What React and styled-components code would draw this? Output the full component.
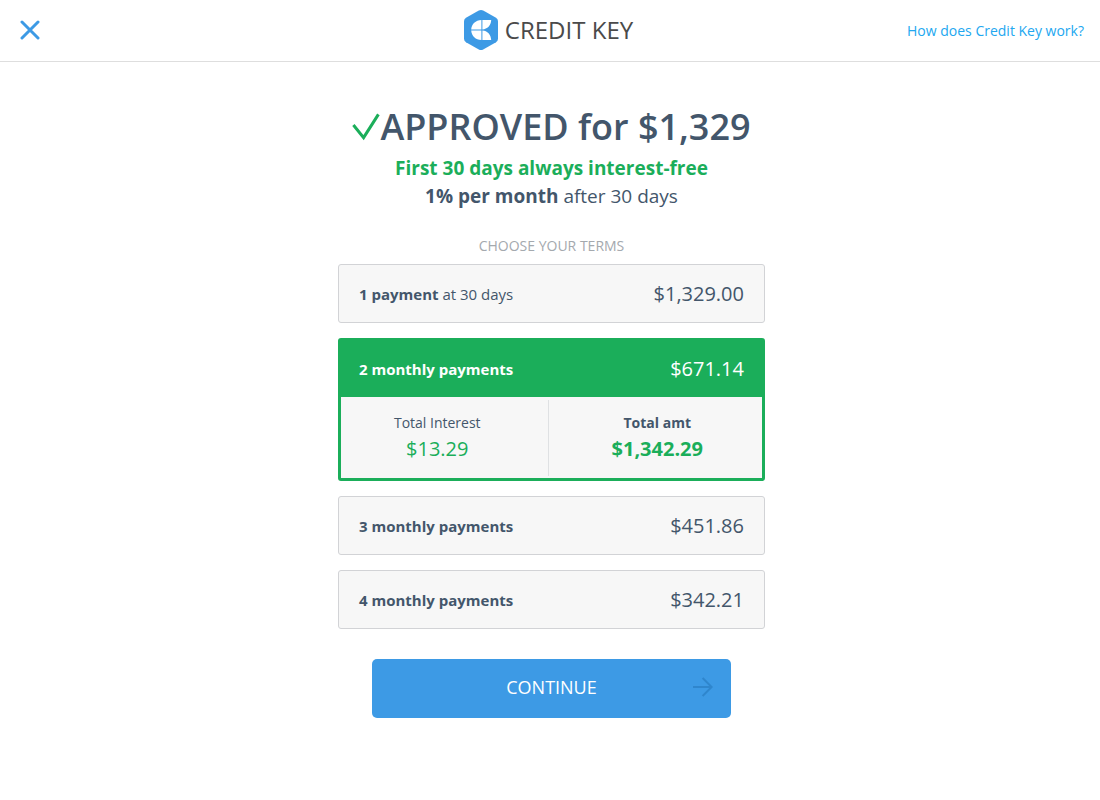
import React, { useState } from 'react'
import styled, { createGlobalStyle } from 'styled-components'

const plans = [
    { id: 1, name: '1 payment', note: ' at 30 days', amount: '$1,329.00', interest: '$0.00', total: '$1,329.00' },
    { id: 2, name: '2 monthly payments', amount: '$671.14', interest: '$13.29', total: '$1,342.29' },
    { id: 3, name: '3 monthly payments', amount: '$451.86', interest: '$26.58', total: '$1,355.58' },
    { id: 4, name: '4 monthly payments', amount: '$342.21', interest: '$39.84', total: '$1,368.84' },
]

function Plan({ plan, checked, onSelect }) {
    return (
        <PlanBox $open={checked}>
            <PlanRow $open={checked}>
                <Radio type='radio' name='terms' value={plan.id} checked={checked} onChange={() => onSelect(plan.id)} />
                <PlanName><b>{plan.name}</b>{plan.note}</PlanName>
                <Amount>{plan.amount}</Amount>
            </PlanRow>
            {checked && (
                <Details>
                    <Interest>
                        <dt>Total Interest</dt>
                        <dd>{plan.interest}</dd>
                    </Interest>
                    <Total>
                        <dt>Total amt</dt>
                        <dd>{plan.total}</dd>
                    </Total>
                </Details>
            )}
        </PlanBox>
    )
}

function App() {
    const [selected, setSelected] = useState(2)

    return (
        <>
            <GlobalStyle />
            <Header>
                <CloseButton type='button' aria-label='Close'>
                    <svg width='20' height='20' viewBox='0 0 20 20' fill='none' stroke='#3d9ae5' strokeWidth='3' strokeLinecap='round'>
                        <path d='M2 2L18 18M18 2L2 18' />
                    </svg>
                </CloseButton>
                <Logo>
                    <svg width='34' height='40' viewBox='0 0 34 40'>
                        <path d='M14.8 .6Q17 -.6 19.2 .6L32 7.8Q34 9 34 11.2V28.8Q34 31 32 32.2L19.2 39.4Q17 40.6 14.8 39.4L2 32.2Q0 31 0 28.8V11.2Q0 9 2 7.8Z' fill='#3d9ae5' />
                        <path d='M17.4 10V19.4H7.2C7.6 14 11.6 10.2 17.4 10ZM7.2 20.4H17.4V30C11.6 29.8 7.6 26 7.2 20.4ZM18.4 10H27.2C27 15.4 23.4 19.2 18.4 19.4ZM18.4 20.4C23.4 20.6 27 24.6 27.2 30H18.4Z' fill='#fff' />
                    </svg>
                    <span>CREDIT KEY</span>
                </Logo>
                <HelpLink href='#how'>How does Credit Key work?</HelpLink>
            </Header>

            <Main>
                <Title>
                    <svg width='28' height='28' viewBox='0 0 28 28' fill='none' stroke='#1bae5a' strokeWidth='3'>
                        <path d='M1.4 12L11.6 24.6L26.4 1.4' />
                    </svg>
                    APPROVED for $1,329
                </Title>
                <Perk>First 30 days always interest-free</Perk>
                <Rate><b>1% per month</b> after 30 days</Rate>

                <Terms>
                    <legend>CHOOSE YOUR TERMS</legend>
                    {plans.map((plan) => (
                        <Plan key={plan.id} plan={plan} checked={plan.id === selected} onSelect={setSelected} />
                    ))}
                </Terms>

                <Continue type='button'>
                    <span>CONTINUE</span>
                    <svg width='20' height='20' viewBox='0 0 20 20' fill='none' stroke='#2f86cd' strokeWidth='2'>
                        <path d='M0 10H18.6M9.6 1L18.6 10L9.6 19' />
                    </svg>
                </Continue>
            </Main>
        </>
    )
}

export default App

const GlobalStyle = createGlobalStyle`
* {
    box-sizing: border-box;
}
body {
    margin: 0;
    background-color: #fff;
    color: #43566b;
    font-family: "Open Sans", "Noto Sans", sans-serif;
}
button {
    font-family: inherit;
    cursor: pointer;
}
`

const Header = styled.header`
    display: grid;
    grid-template-columns: 1fr auto 1fr;
    align-items: center;
    padding: 10px 16px 11px 13px;
    border-bottom: 1px solid #dedede;
`

const CloseButton = styled.button`
    display: flex;
    justify-self: start;
    padding: 7px;
    border: none;
    background: none;
`

const Logo = styled.div`
    display: flex;
    align-items: center;
    gap: 7px;
    color: #4a4a4a;
    font-size: 24px;
    line-height: 40px;
`

const HelpLink = styled.a`
    justify-self: end;
    color: #22a7f0;
    font-size: 14px;
    text-decoration: none;

    &:hover {
        text-decoration: underline;
    }
`

const Main = styled.main`
    display: flex;
    flex-direction: column;
    align-items: center;
    padding: 39px 0 40px 3px;
`

const Title = styled.h1`
    display: flex;
    align-items: center;
    margin: 0;
    font-size: 36px;
    font-weight: 600;
    line-height: 52px;
`

const Perk = styled.p`
    margin: 0;
    padding-top: 1px;
    color: #1bae5a;
    font-size: 19px;
    font-weight: 700;
    line-height: 28px;
`

const Rate = styled.p`
    margin: 0;
    font-size: 19px;
    line-height: 28px;
`

const Terms = styled.fieldset`
    display: flex;
    flex-direction: column;
    gap: 15px;
    width: 100%;
    max-width: 427px;
    min-width: 0;
    margin: 26px 0 0;
    padding: 0;
    border: none;

    legend {
        margin: 0 auto;
        padding: 0 0 8px;
        color: #a4a9ae;
        font-size: 14px;
        line-height: 20px;
    }
`

const PlanBox = styled.div`
    overflow: hidden;
    border: ${(p) => (p.$open ? '3px solid #1bae5a' : '1px solid #d2d3d6')};
    border-radius: 3px;
    background-color: #f7f7f7;
`

const PlanRow = styled.label`
    display: flex;
    align-items: center;
    justify-content: space-between;
    padding: ${(p) => (p.$open ? '14px 18px' : '15px 20px 14px')};
    background-color: ${(p) => (p.$open ? '#1bae5a' : 'transparent')};
    color: ${(p) => (p.$open ? '#fff' : 'inherit')};
    line-height: 28px;
    cursor: pointer;

    &:focus-within {
        text-decoration: underline;
    }
`

const Radio = styled.input`
    appearance: none;
    width: 0;
    height: 0;
    margin: 0;
    outline: none;
`

const PlanName = styled.span`
    flex: 1;
    font-size: 15px;
`

const Amount = styled.span`
    font-size: 20px;
`

const Details = styled.dl`
    display: grid;
    grid-template-columns: 35fr 36fr;
    margin: 0;
    padding: 3px 0 2px;
    text-align: center;

    dt {
        font-size: 14px;
        line-height: 20px;
    }
    dd {
        margin: 0;
        color: #1bae5a;
        font-size: 20px;
        line-height: 32px;
    }
`

const Interest = styled.div`
    padding: 13px 14px 11px 0;
    border-right: 1px solid #dfe1e3;
`

const Total = styled.div`
    padding: 13px 0 11px 4px;
    font-weight: 700;
`

const Continue = styled.button`
    display: grid;
    grid-template-columns: 1fr auto 1fr;
    align-items: center;
    width: 100%;
    max-width: 359px;
    margin-top: 30px;
    padding: 14px 18px 17px;
    border: none;
    border-radius: 5px;
    background-color: #3d9ae5;
    color: #fff;
    font-size: 18px;
    line-height: 28px;

    span {
        grid-column: 2;
    }
    svg {
        justify-self: end;
    }
`
